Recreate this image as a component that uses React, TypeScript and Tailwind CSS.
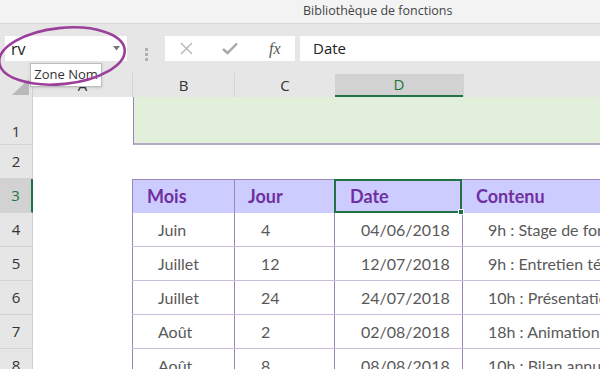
import React from "react";

// Données du tableau (lignes 4 à 8)
const rows = [
  { n: 4, mois: "Juin", jour: "4", date: "04/06/2018", contenu: "9h : Stage de formation" },
  { n: 5, mois: "Juillet", jour: "12", date: "12/07/2018", contenu: "9h : Entretien téléphonique" },
  { n: 6, mois: "Juillet", jour: "24", date: "24/07/2018", contenu: "10h : Présentation" },
  { n: 7, mois: "Août", jour: "2", date: "02/08/2018", contenu: "18h : Animation" },
  { n: 8, mois: "Août", jour: "8", date: "08/08/2018", contenu: "10h : Bilan annuel" },
];

const ui = "font-['Open_Sans',sans-serif]";
const cell = "font-['Lato',sans-serif]";

const RowHead = ({ n, h, active = false, bottom = false }: { n: number; h: string; active?: boolean; bottom?: boolean }) => (
  <div
    className={`w-[33px] shrink-0 ${h} flex justify-center ${bottom ? "items-end pb-[2px]" : "items-center"} border-b border-[#d4d4d4] text-[15px] ${ui} ${
      active ? "bg-[#d2d2d2] text-[#217346] border-r-2 border-r-[#217346]" : "bg-[#e6e6e6] text-[#333] border-r border-r-[#cfcfcf]"
    }`}
  >
    {n}
  </div>
);

export default function App() {
  return (
    <div className="relative w-[600px] h-[369px] overflow-hidden bg-white">
      {/* Barre de titre */}
      <div className="h-[24px] bg-[#f3f3f3] border-b border-[#d8d8d8] flex items-center">
        <span className={`ml-[303px] text-[12.5px] text-[#444] ${ui}`}>Bibliothèque de fonctions</span>
      </div>

      {/* Barre de formule */}
      <div className="h-[49px] bg-[#e6e6e6] pt-[12px] flex">
        <div className="ml-[5px] w-[122px] h-[25px] bg-white flex items-center justify-between pl-[6px] pr-[7px]">
          <span className={`text-[16px] text-[#222] ${ui}`}>rv</span>
          <svg width="7" height="5" viewBox="0 0 7 5">
            <path d="M0 0 L7 0 L3.5 4.5 Z" fill="#7a7a7a" />
          </svg>
        </div>
        <div className="w-[38px] flex flex-col items-center justify-center gap-[2px]">
          <span className="w-[3px] h-[3px] bg-[#b0b0b0]" />
          <span className="w-[3px] h-[3px] bg-[#b0b0b0]" />
          <span className="w-[3px] h-[3px] bg-[#b0b0b0]" />
        </div>
        <div className="w-[130px] h-[25px] bg-white flex items-center">
          <svg className="ml-[15px]" width="13" height="13" viewBox="0 0 13 13">
            <path d="M1 1 L12 12 M12 1 L1 12" stroke="#bdbdbd" strokeWidth="1.6" />
          </svg>
          <svg className="ml-[29px]" width="16" height="13" viewBox="0 0 16 13">
            <path d="M1 7 L5.5 11 L15 1.5" stroke="#a8a8a8" strokeWidth="2.4" fill="none" />
          </svg>
          <span className="ml-[31px] text-[16px] italic text-[#555] font-['Liberation_Serif',serif]">fx</span>
        </div>
        <div className="ml-[5px] flex-1 h-[25px] bg-white flex items-center pl-[13px]">
          <span className={`text-[15px] text-[#222] ${ui}`}>Date</span>
        </div>
      </div>

      {/* En-têtes de colonnes */}
      <div className={`h-[24px] flex bg-[#e6e6e6] text-[15px] text-[#333] ${ui}`}>
        <div className="w-[33px] shrink-0 relative border-r border-[#cfcfcf]">
          <svg className="absolute right-[3px] bottom-[2px]" width="17" height="16" viewBox="0 0 17 16">
            <path d="M17 0 L17 16 L0 16 Z" fill="#b9b9b9" />
          </svg>
        </div>
        <div className="w-[100px] shrink-0 flex items-center justify-center border-r border-[#d4d4d4]">A</div>
        <div className="w-[102px] shrink-0 flex items-center justify-center border-r border-[#d4d4d4]">B</div>
        <div className="w-[100px] shrink-0 flex items-center justify-center">C</div>
        <div className="w-[128px] shrink-0 flex items-center justify-center bg-[#d2d2d2] text-[#217346] border-b-2 border-[#217346] mt-[1px]">D</div>
        <div className="flex-1 border-l border-[#d4d4d4]" />
      </div>

      {/* Ligne 1 : bandeau vert */}
      <div className="flex">
        <RowHead n={1} h="h-[48px]" bottom />
        <div className="w-[100px] shrink-0" />
        <div className="flex-1 h-[48px] bg-[#e2efda] border-l border-[#9c86b8] border-b-2 border-b-[#b6a9c6]" />
      </div>

      {/* Ligne 2 : vide */}
      <div className="flex">
        <RowHead n={2} h="h-[34px]" />
        <div className="flex-1" />
      </div>

      {/* Ligne 3 : en-tête du tableau */}
      <div className="flex">
        <RowHead n={3} h="h-[34px]" active />
        <div className="w-[99px] shrink-0" />
        <div className={`flex-1 flex h-[34px] bg-[#ccccff] border-t border-[#9c86b8] text-[18px] font-bold text-[#7030a0] ${cell}`}>
          <div className="w-[102px] shrink-0 flex items-center pl-[14px] border-l border-[#9c86b8]">Mois</div>
          <div className="w-[100px] shrink-0 flex items-center pl-[13px] border-l border-[#9c86b8]">Jour</div>
          <div className="w-[128px] shrink-0 relative flex items-center pl-[14px] border-2 border-[#217346] -mt-[1px]">
            Date
            <span className="absolute -right-[4px] -bottom-[4px] w-[6px] h-[6px] bg-[#217346] border border-white" />
          </div>
          <div className="flex-1 flex items-center pl-[14px]">Contenu</div>
        </div>
      </div>

      {/* Lignes de données */}
      {rows.map((r) => (
        <div key={r.n} className="flex">
          <RowHead n={r.n} h="h-[34px]" />
          <div className="w-[99px] shrink-0" />
          <div className={`flex-1 flex h-[34px] text-[16px] text-[#595959] border-b border-[#c9bcdb] ${cell}`}>
            <div className="w-[102px] shrink-0 flex items-center pl-[25px] border-l border-[#9c86b8]">{r.mois}</div>
            <div className="w-[100px] shrink-0 flex items-center pl-[26px] border-l border-[#9c86b8]">{r.jour}</div>
            <div className="w-[128px] shrink-0 flex items-center pl-[26px] border-l border-[#9c86b8]">{r.date}</div>
            <div className="flex-1 flex items-center pl-[25px] border-l border-[#9c86b8] whitespace-nowrap overflow-hidden">{r.contenu}</div>
          </div>
        </div>
      ))}

      {/* Infobulle Zone Nom */}
      <div className={`absolute left-[30px] top-[63px] w-[72px] h-[24px] bg-white border border-[#bcbcbc] shadow-sm flex items-center justify-center text-[13px] text-[#333] ${ui}`}>
        Zone Nom
      </div>

      {/* Ellipse d'annotation */}
      <svg className="absolute left-0 top-0 pointer-events-none" width="140" height="100" viewBox="0 0 140 100">
        <ellipse cx="62" cy="56" rx="63" ry="28" fill="none" stroke="#9b3f9b" strokeWidth="2.6" transform="rotate(-6 62 56)" />
      </svg>
    </div>
  );
}
